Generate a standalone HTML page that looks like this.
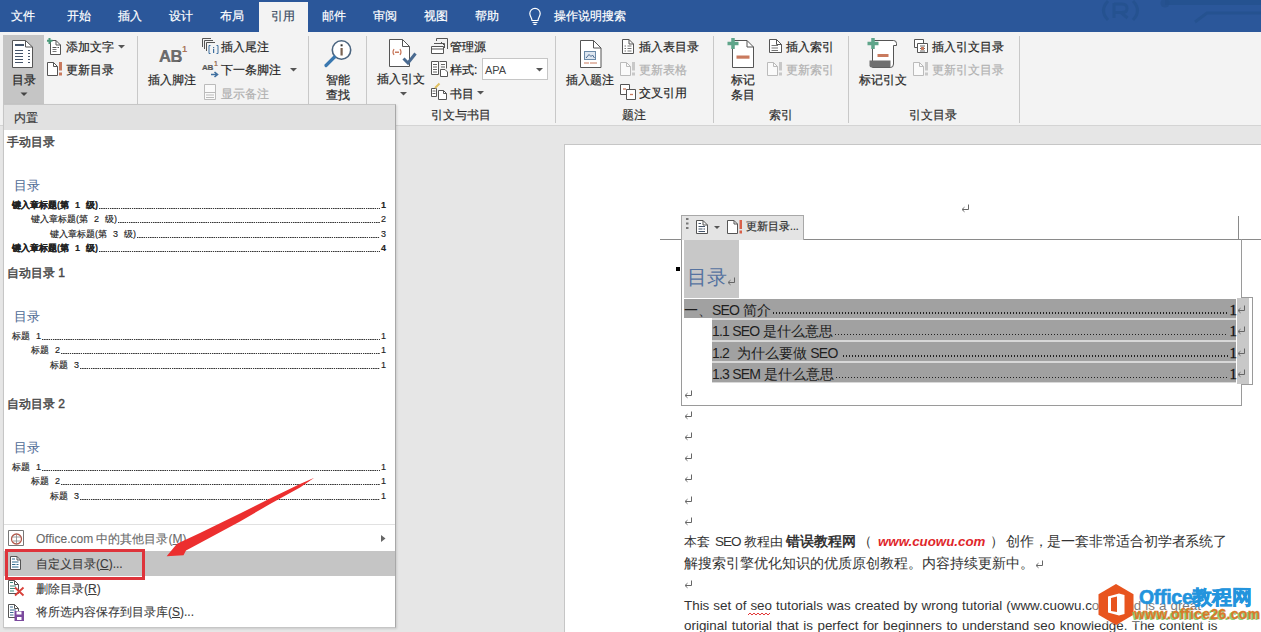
<!DOCTYPE html>
<html><head><meta charset="utf-8">
<style>
*{margin:0;padding:0;box-sizing:border-box}
html,body{width:1261px;height:632px;overflow:hidden;background:#e6e6e6;font-family:"Liberation Sans",sans-serif}
.a{position:absolute}
.t{position:absolute;white-space:nowrap;line-height:1;font-size:12px;color:#262626;-webkit-text-stroke:0.2px #262626}
.tab{-webkit-text-stroke:0.2px #fff}
.tab{color:#fff;top:10px}
.dis{color:#b1b1b1;-webkit-text-stroke:0.2px #b1b1b1}
.sep{position:absolute;width:1px;background:#c8c8c8;top:36px;height:87px}
.lbl{top:109px;color:#333}
svg{position:absolute;overflow:visible}
</style></head><body>
<!-- tab bar -->
<div class="a" style="left:0;top:0;width:1261px;height:32px;background:#2b579a"></div>
<div class="a" style="left:259px;top:2px;width:49px;height:30px;background:#f3f3f3"></div>
<div class="t tab" style="left:11px">文件</div>
<div class="t tab" style="left:67px">开始</div>
<div class="t tab" style="left:118px">插入</div>
<div class="t tab" style="left:169px">设计</div>
<div class="t tab" style="left:220px">布局</div>
<div class="t tab" style="left:271px;color:#3b4b63;-webkit-text-stroke:0.2px #3b4b63">引用</div>
<div class="t tab" style="left:322px">邮件</div>
<div class="t tab" style="left:373px">审阅</div>
<div class="t tab" style="left:424px">视图</div>
<div class="t tab" style="left:475px">帮助</div>
<div class="t tab" style="left:554px">操作说明搜索</div>

<!-- ribbon -->
<div class="a" style="left:0;top:32px;width:1261px;height:94px;background:#f3f3f3;border-bottom:1px solid #d4d4d4"></div>

<div class="a" style="left:3px;top:35px;width:41px;height:70px;background:#c5c5c5"></div>
<div class="t" style="left:12px;top:74px">目录</div>
<div class="t" style="left:66px;top:41px">添加文字</div>
<div class="t" style="left:66px;top:64px">更新目录</div>
<div class="sep" style="left:137px"></div>
<div class="t" style="left:148px;top:74px">插入脚注</div>
<div class="t" style="left:221px;top:41px">插入尾注</div>
<div class="t" style="left:221px;top:64px">下一条脚注</div>
<div class="t dis" style="left:221px;top:88px">显示备注</div>
<div class="sep" style="left:308px"></div>
<div class="t" style="left:326px;top:74px">智能</div>
<div class="t" style="left:326px;top:89px">查找</div>
<div class="sep" style="left:366px"></div>
<div class="t" style="left:377px;top:73px">插入引文</div>
<div class="t" style="left:450px;top:41px">管理源</div>
<div class="t" style="left:450px;top:64px">样式:</div>
<div class="a" style="left:482px;top:58px;width:66px;height:22px;background:#fff;border:1px solid #c6c6c6"></div>
<div class="t" style="left:485px;top:65px;font-size:11px;color:#444;-webkit-text-stroke:0">APA</div>
<div class="t" style="left:450px;top:88px">书目</div>
<div class="t lbl" style="left:431px">引文与书目</div>
<div class="sep" style="left:555px"></div>
<div class="t" style="left:566px;top:74px">插入题注</div>
<div class="t" style="left:639px;top:41px">插入表目录</div>
<div class="t dis" style="left:639px;top:64px">更新表格</div>
<div class="t" style="left:639px;top:87px">交叉引用</div>
<div class="t lbl" style="left:622px">题注</div>
<div class="sep" style="left:713px"></div>
<div class="t" style="left:731px;top:74px">标记</div>
<div class="t" style="left:731px;top:89px">条目</div>
<div class="t" style="left:786px;top:41px">插入索引</div>
<div class="t dis" style="left:786px;top:64px">更新索引</div>
<div class="t lbl" style="left:769px">索引</div>
<div class="sep" style="left:848px"></div>
<div class="t" style="left:859px;top:74px">标记引文</div>
<div class="t" style="left:932px;top:41px">插入引文目录</div>
<div class="t dis" style="left:932px;top:64px">更新引文目录</div>
<div class="t lbl" style="left:909px">引文目录</div>
<div class="sep" style="left:1019px"></div>

<!-- doc area -->
<div class="a" style="left:564px;top:144px;width:700px;height:500px;background:#fff;border-left:1px solid #c6c6c6;border-top:1px solid #c6c6c6"></div>


<style>
.pg{position:absolute;white-space:nowrap;line-height:1;color:#333}
.tr{position:absolute;height:19.3px;background:#a1a1a1}
.tt{position:absolute;white-space:nowrap;line-height:1;font-size:13.5px;color:#1e1e1e;display:flex;align-items:flex-end}
.tt .ld{flex:1;height:1.5px;margin:0 2px 3.5px 2px;background:linear-gradient(90deg,#222 50%,transparent 50%);background-size:3px 1.5px}
.tt .pn{font-family:"Liberation Serif",serif;font-size:15px;color:#111;-webkit-text-stroke:0.3px #111;position:relative;top:0.5px}
.lat{font-size:14px;letter-spacing:-0.8px}
</style>
<!-- crop marks -->
<div class="a" style="left:660px;top:239px;width:601px;height:1px;background:#8a8a8a"></div>
<div class="a" style="left:1238px;top:216px;width:1px;height:23px;background:#8a8a8a"></div>
<!-- content control -->
<div class="a" style="left:681px;top:239px;width:1px;height:166px;background:#9a9a9a"></div>
<div class="a" style="left:681px;top:405px;width:561px;height:1px;background:#9a9a9a"></div>
<div class="a" style="left:1241px;top:239px;width:1px;height:59px;background:#9a9a9a"></div>
<div class="a" style="left:1241px;top:384px;width:1px;height:22px;background:#9a9a9a"></div>
<div class="a" style="left:1241px;top:297px;width:12px;height:88px;background:#fff;border:1px solid #9a9a9a;border-left:none"></div>
<div class="a" style="left:1237px;top:298px;width:12px;height:86px;background:#c8c8c8"></div>
<div class="a" style="left:681px;top:215px;width:123px;height:25px;background:#e4e4e4;border:1px solid #a8a8a8;border-bottom:none"></div>
<div class="t" style="left:746px;top:221px;font-size:10.5px;color:#333">更新目录...</div>
<!-- heading -->
<div class="a" style="left:684px;top:240px;width:55px;height:58px;background:#c8c8c8"></div>
<div class="a" style="left:676px;top:267px;width:4px;height:4px;background:#000"></div>
<div class="pg" style="left:687px;top:267px;font-size:20px;color:#5673a0">目录</div>
<!-- rows -->
<div class="a" style="left:712px;top:318px;width:524px;height:65px;background:#d8d8d8"></div>
<div class="tr" style="left:684px;top:299px;width:552px"></div>
<div class="tr" style="left:712px;top:320.3px;width:524px"></div>
<div class="tr" style="left:712px;top:341.6px;width:524px"></div>
<div class="tr" style="left:712px;top:362.9px;width:524px"></div>
<div class="tt" style="left:684px;top:302px;width:553px"><span>一、<span class="lat">SEO</span> 简介</span><span class="ld"></span><span class="pn">1</span></div>
<div class="tt" style="left:712px;top:323.5px;width:525px"><span><span class="lat">1.1 SEO</span> 是什么意思</span><span class="ld"></span><span class="pn">1</span></div>
<div class="tt" style="left:712px;top:345px;width:525px"><span style="white-space:pre"><span class="lat">1.2</span>  为什么要做 <span class="lat">SEO</span> </span><span class="ld"></span><span class="pn">1</span></div>
<div class="tt" style="left:712px;top:366.5px;width:525px"><span><span class="lat">1.3 SEM</span> 是什么意思</span><span class="ld"></span><span class="pn">1</span></div>
<!-- body paragraph -->
<div class="pg" style="left:684px;top:535px;font-size:13.4px">本套</div>
<div class="pg" style="left:715px;top:535px;font-size:13.5px;letter-spacing:-1px">SEO</div>
<div class="pg" style="left:744px;top:535px;font-size:13.4px">教程由</div>
<div class="pg" style="left:786px;top:535px;font-size:13.7px;font-weight:bold">错误教程网</div>
<div class="pg" style="left:858px;top:535px;font-size:13.8px">（</div>
<div class="pg" style="left:878px;top:535px;font-size:13.3px;color:#e0262a;font-weight:bold;font-style:italic">www.cuowu.com</div>
<div class="pg" style="left:990px;top:535px;font-size:13.8px">）</div>
<div class="pg" style="left:1006px;top:535px;font-size:13.8px;letter-spacing:-0.2px">创作，是一套非常适合初学者系统了</div>
<div class="pg" style="left:684px;top:556px;font-size:14px">解搜索引擎优化知识的优质原创教程。内容持续更新中。</div>
<div class="pg" style="left:684px;top:599px;font-size:13.4px;word-spacing:0.3px">This set of seo tutorials was created by wrong tutorial (www.cuowu.com) and is a great</div>
<div class="pg" style="left:684px;top:619px;font-size:13.4px;word-spacing:0.8px">original tutorial that is perfect for beginners to understand seo knowledge. The content is</div>
<!-- dropdown panel -->
<div class="a" style="left:3px;top:104px;width:393px;height:524px;background:#fff;border:1px solid #c6c6c6;border-right-color:#a8a8a8;box-shadow:1px 1px 2px rgba(0,0,0,0.12)"></div>
<div class="a" style="left:4px;top:105px;width:391px;height:25px;background:#e1e1e1"></div>
<div class="t" style="left:14px;top:112px;color:#444">内置</div>
<div class="t" style="left:7px;top:136px;color:#484848;-webkit-text-stroke:0.45px #484848">手动目录</div>
<div class="t" style="left:7px;top:267px;color:#484848;-webkit-text-stroke:0.45px #484848">自动目录 1</div>
<div class="t" style="left:7px;top:398px;color:#484848;-webkit-text-stroke:0.45px #484848">自动目录 2</div>


<style>
.pv{position:absolute;font-size:13px;line-height:1;color:#4d6a94;white-space:nowrap}
.row{position:absolute;display:flex;align-items:flex-end;font-size:9px;line-height:9px;color:#222;white-space:nowrap;-webkit-text-stroke:0.15px #222}
.row .ld{flex:1;height:1px;margin:0 1px 1px 1px;background:linear-gradient(90deg,#333 50%,transparent 50%);background-size:2.2px 1px}
.row span:first-child{word-spacing:3.5px}
.b{font-weight:bold}
.mi{position:absolute;font-size:12px;line-height:1;color:#3a3a3a;white-space:nowrap;-webkit-text-stroke:0.1px #3a3a3a}
</style>
<div class="pv" style="left:14px;top:179px">目录</div>
<div class="row b" style="left:12px;top:201px;width:374px"><span>键入章标题(第 1 级)</span><span class="ld"></span><span>1</span></div>
<div class="row" style="left:31px;top:215px;width:355px"><span>键入章标题(第 2 级)</span><span class="ld"></span><span>2</span></div>
<div class="row" style="left:50px;top:230px;width:336px"><span>键入章标题(第 3 级)</span><span class="ld"></span><span>3</span></div>
<div class="row b" style="left:12px;top:244px;width:374px"><span>键入章标题(第 1 级)</span><span class="ld"></span><span>4</span></div>

<div class="pv" style="left:14px;top:310px">目录</div>
<div class="row" style="left:12px;top:332px;width:374px"><span>标题 1</span><span class="ld"></span><span>1</span></div>
<div class="row" style="left:31px;top:346px;width:355px"><span>标题 2</span><span class="ld"></span><span>1</span></div>
<div class="row" style="left:50px;top:361px;width:336px"><span>标题 3</span><span class="ld"></span><span>1</span></div>

<div class="pv" style="left:14px;top:441px">目录</div>
<div class="row" style="left:12px;top:463px;width:374px"><span>标题 1</span><span class="ld"></span><span>1</span></div>
<div class="row" style="left:31px;top:477px;width:355px"><span>标题 2</span><span class="ld"></span><span>1</span></div>
<div class="row" style="left:50px;top:492px;width:336px"><span>标题 3</span><span class="ld"></span><span>1</span></div>

<div class="a" style="left:4px;top:524px;width:391px;height:1px;background:#e1e1e1"></div>
<div class="mi" style="left:36px;top:533px;color:#6a6a6a;-webkit-text-stroke:0.1px #6a6a6a">Office.com 中的其他目录(<u>M</u>)</div>
<div class="a" style="left:4px;top:551px;width:391px;height:25px;background:#c5c5c5"></div>
<div class="mi" style="left:36px;top:558px">自定义目录(<u>C</u>)...</div>
<div class="mi" style="left:36px;top:583px">删除目录(<u>R</u>)</div>
<div class="mi" style="left:36px;top:606px">将所选内容保存到目录库(<u>S</u>)...</div>
<div class="a" style="left:5px;top:549px;width:140px;height:31px;border:3px solid #de343b"></div>
<svg style="left:0;top:0" width="1261" height="632"><polygon points="166.6,556.2 177,543.8 200,533 240,513.5 270,498.5 300,484 314.3,477.7 300,487.5 270,504 240,521.5 200,543 186,550.5 183.5,555.3" fill="#ec2f2f"/></svg>
<!--ICONS-->
<svg style="left:12px;top:40px" width="21" height="28" viewBox="0 0 21 28"><path d="M0.5,0.5H13.5L20.5,7V27.5H0.5Z" fill="#fff" stroke="#555"/><path d="M13.5,0.5V7H20.5" fill="none" stroke="#555"/><rect x="3" y="4" width="9" height="2" fill="#44546a"/><rect x="3" y="10" width="8" height="1" fill="#44546a"/><rect x="16" y="10" width="2" height="1" fill="#44546a"/><rect x="3" y="13" width="8" height="1" fill="#44546a"/><rect x="16" y="13" width="2" height="1" fill="#44546a"/><rect x="3" y="16" width="8" height="1" fill="#44546a"/><rect x="16" y="16" width="2" height="1" fill="#44546a"/><rect x="3" y="19" width="8" height="1" fill="#44546a"/><rect x="16" y="19" width="2" height="1" fill="#44546a"/><rect x="3" y="22" width="8" height="1" fill="#44546a"/><rect x="16" y="22" width="2" height="1" fill="#44546a"/></svg>
<svg style="left:20px;top:92px" width="8" height="5" viewBox="0 0 8 5"><path d="M0.5,0.5H7.5L4,4Z" fill="#444"/></svg>
<svg style="left:47px;top:38px" width="14" height="17" viewBox="0 0 14 17"><path d="M3.5,2.5H9L13.5,7V16.5H3.5Z" fill="#fff" stroke="#555"/><path d="M9,2.5V7H13.5" fill="none" stroke="#555"/><path d="M2.5,0V6M0,2.8H5.5" stroke="#4a9a7a" stroke-width="2"/><rect x="5.5" y="9" width="4" height="1" fill="#555"/><rect x="10.5" y="9" width="1.5" height="1" fill="#555"/><rect x="5.5" y="11" width="4" height="1" fill="#777"/><rect x="5.5" y="13" width="4" height="1" fill="#777"/></svg>
<svg style="left:118px;top:45px" width="7" height="4" viewBox="0 0 7 4"><path d="M0,0H7L3.5,3.5Z" fill="#555"/></svg>
<svg style="left:47px;top:62px" width="16" height="14" viewBox="0 0 16 14"><path d="M0.5,0.5H6.5L10.5,4.5V13.5H0.5Z" fill="#fff" stroke="#555"/><path d="M6.5,0.5V4.5H10.5" fill="none" stroke="#555"/><rect x="12" y="0" width="3" height="8.5" fill="#c97a5e"/><rect x="12" y="10.5" width="3" height="3" fill="#c97a5e"/></svg>
<div class="t" style="left:159px;top:48px;font-size:16.5px;font-weight:bold;color:#6e6e6e;letter-spacing:-0.5px">AB</div><div class="t" style="left:182px;top:44px;font-size:9.5px;color:#d9804f">1</div><svg style="left:202px;top:38px" width="17" height="16" viewBox="0 0 17 16"><path d="M0.5,9V0.5H9M2.5,11V2.5H11M4.5,13V4.5H13" fill="none" stroke="#555"/><path d="M8.5,7.5H7V15.5H8.5M14.5,7.5H16V15.5H14.5" fill="none" stroke="#3f70a0"/><rect x="11" y="9" width="1.2" height="1.2" fill="#3f70a0"/><rect x="11" y="11" width="1.2" height="4" fill="#3f70a0"/></svg>
<div class="t" style="left:202px;top:64px;font-size:8px;font-weight:bold;color:#6e6e6e;letter-spacing:-0.3px">AB</div><div class="t" style="left:214px;top:60px;font-size:7px;color:#d9804f">1</div><svg style="left:211px;top:72px" width="8" height="5" viewBox="0 0 8 5"><path d="M0,2.5H6M3.5,0L6.5,2.5L3.5,5" fill="none" stroke="#3f70a0" stroke-width="1.6"/></svg>
<svg style="left:290px;top:68px" width="7" height="4" viewBox="0 0 7 4"><path d="M0,0H7L3.5,3.5Z" fill="#555"/></svg>
<svg style="left:204px;top:84px" width="12" height="16" viewBox="0 0 12 16"><path d="M0.5,0.5H11.5V15.5H0.5Z" fill="#fafafa" stroke="#bbb"/><path d="M0.5,8.5H11.5M2,11H10M2,13.5H10" stroke="#bbb"/></svg>
<svg style="left:323px;top:39px" width="30" height="29" viewBox="0 0 30 29"><circle cx="18.5" cy="11" r="9.2" fill="#fff" stroke="#4b6580" stroke-width="1.6"/><path d="M11.5,18L3,26.5" stroke="#3a78b0" stroke-width="3.2" stroke-linecap="round"/><rect x="17.5" y="9" width="2.2" height="7.5" fill="#7a6352"/><rect x="17.6" y="5.3" width="2" height="2" fill="#333"/></svg>
<svg style="left:389px;top:39px" width="28" height="28" viewBox="0 0 28 28"><path d="M0.5,0.5H13.5L20.5,7.5V27.5H0.5Z" fill="#fff" stroke="#555"/><path d="M13.5,0.5V7.5H20.5" fill="none" stroke="#555"/><path d="M5,10Q3,13 5,16M11,10Q13,13 11,16" fill="none" stroke="#c97a5e" stroke-width="1.2"/><rect x="6" y="12.5" width="4" height="1.5" fill="#c97a5e"/><path d="M14.5,19.5L19,24L26.5,14.5" fill="none" stroke="#4a6a90" stroke-width="3"/></svg>
<svg style="left:400px;top:92px" width="7" height="4" viewBox="0 0 7 4"><path d="M0,0H7L3.5,3.5Z" fill="#555"/></svg>
<svg style="left:431px;top:38px" width="17" height="16" viewBox="0 0 17 16"><path d="M5.5,3V0.5H16.5V11M3,5.5H13.5V10" fill="none" stroke="#555"/><path d="M0.5,8.5H12.5V15.5H0.5Z" fill="#fff" stroke="#555"/><path d="M1,11H12" stroke="#555"/><path d="M10,4L13,7" stroke="#555"/></svg>
<svg style="left:431px;top:61px" width="17" height="16" viewBox="0 0 17 16"><path d="M0.5,0.5H7.5V13.5H0.5ZM8.5,0.5H15.5V7.5" fill="#fff" stroke="#555"/><path d="M2,3.5H6M2,6H6M2,8.5H6M2,11H6M10,3.5H14M10,6H14" stroke="#666"/><path d="M9.5,8.5H14L16.5,11V15.5H9.5Z" fill="#fff" stroke="#555"/></svg>
<svg style="left:536px;top:68px" width="7" height="4" viewBox="0 0 7 4"><path d="M0,0H7L3.5,3.5Z" fill="#555"/></svg>
<svg style="left:431px;top:83px" width="17" height="17" viewBox="0 0 17 17"><path d="M0.5,5.5H5.5V13.5H0.5Z" fill="#fff" stroke="#555"/><path d="M1.5,8H4.5M1.5,10.5H4.5" stroke="#666"/><path d="M4,5L8.5,0.5" stroke="#e0c060" stroke-width="2"/><path d="M7.5,7.5H12.5L15.5,10.5V16.5H7.5Z" fill="#fff" stroke="#555"/><path d="M12.5,7.5V10.5H15.5" fill="none" stroke="#555"/></svg>
<svg style="left:477px;top:91px" width="7" height="4" viewBox="0 0 7 4"><path d="M0,0H7L3.5,3.5Z" fill="#555"/></svg>
<svg style="left:580px;top:40px" width="22" height="28" viewBox="0 0 22 28"><path d="M0.5,0.5H13.5L21,8V27.5H0.5Z" fill="#fff" stroke="#555"/><path d="M13.5,0.5V8H21" fill="none" stroke="#555"/><rect x="4.5" y="11.5" width="11" height="8" fill="#dde6f0" stroke="#6b8aa8"/><path d="M6,18L9,14.5L11,16.5L12.5,15L14.5,18" fill="none" stroke="#4a6a90"/><path d="M4,23H9M10,23H17" stroke="#c97a5e" stroke-width="1"/></svg>
<svg style="left:622px;top:39px" width="12" height="15" viewBox="0 0 12 15"><path d="M0.5,0.5H7L11.5,5V14.5H0.5Z" fill="#fff" stroke="#555"/><path d="M7,0.5V5H11.5" fill="none" stroke="#555"/><path d="M2.5,7H4M5.5,7H9.5M2.5,9.5H4M5.5,9.5H9.5M2.5,12H4M5.5,12H9.5" stroke="#777"/></svg>
<svg style="left:620px;top:62px" width="16" height="14" viewBox="0 0 16 14"><path d="M0.5,0.5H6.5L10.5,4.5V13.5H0.5Z" fill="#fafafa" stroke="#bbb"/><path d="M6.5,0.5V4.5H10.5" fill="none" stroke="#bbb"/><rect x="12" y="0" width="3" height="8.5" fill="#c8c8c8"/><rect x="12" y="10.5" width="3" height="3" fill="#c8c8c8"/></svg>
<svg style="left:620px;top:84px" width="17" height="16" viewBox="0 0 17 16"><path d="M0.5,0.5H9.5V10.5H0.5Z" fill="#fff" stroke="#555"/><path d="M6.5,5.5H15.5V15.5H6.5Z" fill="#fff" stroke="#555"/><path d="M3,5H6" stroke="#c97a5e" stroke-width="1.3"/><path d="M10,10.5H13" stroke="#c97a5e" stroke-width="1.3"/></svg>
<svg style="left:727px;top:38px" width="28" height="30" viewBox="0 0 28 30"><path d="M5.5,2.5H20L26.5,9V29.5H5.5Z" fill="#fff" stroke="#555"/><path d="M20,2.5V9H26.5" fill="none" stroke="#555"/><path d="M6,0V11M0.5,5.5H11.5" stroke="#5fa58a" stroke-width="3.5"/><rect x="9.5" y="17.5" width="13" height="3.2" fill="#c97a5e"/></svg>
<svg style="left:769px;top:39px" width="13" height="14" viewBox="0 0 13 14"><path d="M0.5,0.5H7.5L12.5,5.5V13.5H0.5Z" fill="#fff" stroke="#555"/><path d="M7.5,0.5V5.5H12.5" fill="none" stroke="#555"/><path d="M2.5,6.5H9M2.5,9H9M2.5,11.5H9" stroke="#777"/></svg>
<svg style="left:767px;top:62px" width="16" height="14" viewBox="0 0 16 14"><path d="M0.5,0.5H6.5L10.5,4.5V13.5H0.5Z" fill="#fafafa" stroke="#bbb"/><path d="M6.5,0.5V4.5H10.5" fill="none" stroke="#bbb"/><rect x="12" y="0" width="3" height="8.5" fill="#c8c8c8"/><rect x="12" y="10.5" width="3" height="3" fill="#c8c8c8"/></svg>
<svg style="left:867px;top:38px" width="31" height="30" viewBox="0 0 31 30"><path d="M5.5,2.5H26.5Q29.5,2.5 29.5,5.5V7.5H26.5V26Q26.5,29.5 23.5,29.5H5.5Z" fill="#fff" stroke="#555"/><path d="M2.5,22.5H23.5V29.5H4.5Q2.5,29.5 2.5,27.5Z" fill="#6f6f6f"/><path d="M6,0V11M0.5,5.5H11.5" stroke="#5fa58a" stroke-width="3.5"/><rect x="10.5" y="16" width="11" height="3" fill="#c97a5e"/></svg>
<svg style="left:914px;top:39px" width="15" height="14" viewBox="0 0 15 14"><path d="M0.5,0.5H9.5V8.5H0.5Z" fill="#fff" stroke="#555"/><path d="M3.5,4.5H13.5V13.5H3.5Z" fill="#fff" stroke="#555"/><path d="M6,7H11M6,9.5H11M6,12H11" stroke="#666"/><rect x="7" y="8" width="3" height="3" fill="#c97a5e"/></svg>
<svg style="left:913px;top:62px" width="16" height="14" viewBox="0 0 16 14"><path d="M0.5,0.5H6.5L10.5,4.5V13.5H0.5Z" fill="#fafafa" stroke="#bbb"/><path d="M6.5,0.5V4.5H10.5" fill="none" stroke="#bbb"/><rect x="12" y="0" width="3" height="8.5" fill="#c8c8c8"/><rect x="12" y="10.5" width="3" height="3" fill="#c8c8c8"/></svg>
<svg style="left:529px;top:8px" width="12" height="17" viewBox="0 0 12 17"><path d="M3,12.5C3,10 0.8,8.5 0.8,5.6A5.2,5.2 0 0 1 11.2,5.6C11.2,8.5 9,10 9,12.5Z" fill="none" stroke="#fff" stroke-width="1.2"/><path d="M3.5,14.5H8.5M4.5,16.3H7.5" stroke="#fff" stroke-width="1.2"/></svg>
<svg style="left:961px;top:204px" width="9" height="8" viewBox="0 0 9 8"><path d="M7.5,0.5V5.5H1.5" fill="none" stroke="#666" stroke-width="1"/><path d="M3.5,3.2L1,5.5L3.5,7.8" fill="none" stroke="#666" stroke-width="1"/></svg>
<svg style="left:727px;top:277px" width="9" height="8" viewBox="0 0 9 8"><path d="M7.5,0.5V5.5H1.5" fill="none" stroke="#666" stroke-width="1"/><path d="M3.5,3.2L1,5.5L3.5,7.8" fill="none" stroke="#666" stroke-width="1"/></svg>
<svg style="left:684px;top:390px" width="9" height="8" viewBox="0 0 9 8"><path d="M7.5,0.5V5.5H1.5" fill="none" stroke="#666" stroke-width="1"/><path d="M3.5,3.2L1,5.5L3.5,7.8" fill="none" stroke="#666" stroke-width="1"/></svg>
<svg style="left:684px;top:411px" width="9" height="8" viewBox="0 0 9 8"><path d="M7.5,0.5V5.5H1.5" fill="none" stroke="#666" stroke-width="1"/><path d="M3.5,3.2L1,5.5L3.5,7.8" fill="none" stroke="#666" stroke-width="1"/></svg>
<svg style="left:684px;top:432px" width="9" height="8" viewBox="0 0 9 8"><path d="M7.5,0.5V5.5H1.5" fill="none" stroke="#666" stroke-width="1"/><path d="M3.5,3.2L1,5.5L3.5,7.8" fill="none" stroke="#666" stroke-width="1"/></svg>
<svg style="left:684px;top:453px" width="9" height="8" viewBox="0 0 9 8"><path d="M7.5,0.5V5.5H1.5" fill="none" stroke="#666" stroke-width="1"/><path d="M3.5,3.2L1,5.5L3.5,7.8" fill="none" stroke="#666" stroke-width="1"/></svg>
<svg style="left:684px;top:474px" width="9" height="8" viewBox="0 0 9 8"><path d="M7.5,0.5V5.5H1.5" fill="none" stroke="#666" stroke-width="1"/><path d="M3.5,3.2L1,5.5L3.5,7.8" fill="none" stroke="#666" stroke-width="1"/></svg>
<svg style="left:684px;top:496px" width="9" height="8" viewBox="0 0 9 8"><path d="M7.5,0.5V5.5H1.5" fill="none" stroke="#666" stroke-width="1"/><path d="M3.5,3.2L1,5.5L3.5,7.8" fill="none" stroke="#666" stroke-width="1"/></svg>
<svg style="left:684px;top:517px" width="9" height="8" viewBox="0 0 9 8"><path d="M7.5,0.5V5.5H1.5" fill="none" stroke="#666" stroke-width="1"/><path d="M3.5,3.2L1,5.5L3.5,7.8" fill="none" stroke="#666" stroke-width="1"/></svg>
<svg style="left:684px;top:580px" width="9" height="8" viewBox="0 0 9 8"><path d="M7.5,0.5V5.5H1.5" fill="none" stroke="#666" stroke-width="1"/><path d="M3.5,3.2L1,5.5L3.5,7.8" fill="none" stroke="#666" stroke-width="1"/></svg>
<svg style="left:1035px;top:560px" width="9" height="8" viewBox="0 0 9 8"><path d="M7.5,0.5V5.5H1.5" fill="none" stroke="#666" stroke-width="1"/><path d="M3.5,3.2L1,5.5L3.5,7.8" fill="none" stroke="#666" stroke-width="1"/></svg>
<svg style="left:1237px;top:305px" width="9" height="8" viewBox="0 0 9 8"><path d="M7.5,0.5V5.5H1.5" fill="none" stroke="#666" stroke-width="1"/><path d="M3.5,3.2L1,5.5L3.5,7.8" fill="none" stroke="#666" stroke-width="1"/></svg>
<svg style="left:1237px;top:326px" width="9" height="8" viewBox="0 0 9 8"><path d="M7.5,0.5V5.5H1.5" fill="none" stroke="#666" stroke-width="1"/><path d="M3.5,3.2L1,5.5L3.5,7.8" fill="none" stroke="#666" stroke-width="1"/></svg>
<svg style="left:1237px;top:348px" width="9" height="8" viewBox="0 0 9 8"><path d="M7.5,0.5V5.5H1.5" fill="none" stroke="#666" stroke-width="1"/><path d="M3.5,3.2L1,5.5L3.5,7.8" fill="none" stroke="#666" stroke-width="1"/></svg>
<svg style="left:1237px;top:369px" width="9" height="8" viewBox="0 0 9 8"><path d="M7.5,0.5V5.5H1.5" fill="none" stroke="#666" stroke-width="1"/><path d="M3.5,3.2L1,5.5L3.5,7.8" fill="none" stroke="#666" stroke-width="1"/></svg>
<svg style="left:686px;top:218px" width="3" height="12" viewBox="0 0 3 12"><rect x="0" y="0" width="2.5" height="2" fill="#777"/><rect x="0" y="4.5" width="2.5" height="2" fill="#777"/><rect x="0" y="9" width="2.5" height="2" fill="#777"/></svg>
<svg style="left:696px;top:220px" width="12" height="14" viewBox="0 0 12 14"><path d="M0.5,0.5H7L11.5,5V13.5H0.5Z" fill="#fff" stroke="#555"/><path d="M7,0.5V5H11.5" fill="none" stroke="#555"/><path d="M2.5,3.5H5M2.5,6.5H9M2.5,9H6.5M7.5,9H9M2.5,11.5H9" stroke="#44546a"/></svg>
<svg style="left:714px;top:226px" width="6" height="4" viewBox="0 0 6 4"><path d="M0,0H6L3,3Z" fill="#555"/></svg>
<svg style="left:727px;top:220px" width="16" height="14" viewBox="0 0 16 14"><path d="M0.5,0.5H7L10.5,4V13.5H0.5Z" fill="#fff" stroke="#555"/><path d="M7,0.5V4H10.5" fill="none" stroke="#555"/><rect x="12.5" y="0" width="2.5" height="9" fill="#d9604a"/><rect x="12.5" y="10.5" width="2.5" height="3" fill="#d9604a"/></svg>
<svg style="left:8px;top:530px" width="16" height="16" viewBox="0 0 16 16"><path d="M0.5,0.5H15.5V15.5H0.5Z" fill="#fff" stroke="#777"/><circle cx="8.5" cy="9" r="5" fill="none" stroke="#b5584a" stroke-width="1.3"/><path d="M4,7H13M5,11H12M8.5,4V14" stroke="#888" stroke-width="0.8"/></svg>
<svg style="left:10px;top:556px" width="11" height="14" viewBox="0 0 11 14"><path d="M0.5,0.5H7L10.5,4V13.5H0.5Z" fill="#fff" stroke="#555"/><path d="M7,0.5V4H10.5" fill="none" stroke="#555"/><path d="M2,3H5M2,6H8.5M2,8.5H5.5M6.5,8.5H8.5M2,11H8.5" stroke="#2f6c8f"/></svg>
<svg style="left:8px;top:580px" width="17" height="16" viewBox="0 0 17 16"><path d="M0.5,0.5H6.5L10.5,4.5V13.5H0.5Z" fill="#fff" stroke="#555"/><path d="M6.5,0.5V4.5H10.5" fill="none" stroke="#555"/><path d="M2,2.5H5M2,6H8M2,8.5H7M2,11H6" stroke="#3a8a7a"/><path d="M7,7.5L15.5,15.5M15.5,7.5L7,15.5" stroke="#d8403a" stroke-width="1.8"/></svg>
<svg style="left:8px;top:604px" width="17" height="18" viewBox="0 0 17 18"><path d="M0.5,0.5H6.5L10.5,4.5V13.5H0.5Z" fill="#fff" stroke="#555"/><path d="M6.5,0.5V4.5H10.5" fill="none" stroke="#555"/><path d="M2,3H5M2,6H8M2,8.5H5.5M2,11H5.5" stroke="#3a6a8f"/><rect x="6.5" y="7" width="9.5" height="10" fill="#7b4a9e"/><rect x="8.5" y="7.5" width="5" height="3" fill="#fff"/><rect x="9" y="13" width="4.5" height="3" fill="#fff"/></svg>
<svg style="left:381px;top:535px" width="5" height="7" viewBox="0 0 5 7"><path d="M0,0L4.5,3.5L0,7Z" fill="#666"/></svg>
<svg style="left:748px;top:612px" width="23" height="4" viewBox="0 0 23 4"><path d="M0,3 L2,1 L4,3 L6,1 L8,3 L10,1 L12,3 L14,1 L16,3 L18,1 L20,3 L22,1" fill="none" stroke="#e02020" stroke-width="0.9"/></svg>
<svg style="left:1095px;top:0px" width="166" height="25" viewBox="0 0 166 25"><g fill="none" stroke="#23508c" opacity="0.65"><path d="M13,1Q4,10.5 13,20M38,1Q47,10.5 38,20" stroke-width="3"/><path d="M19,3V18M19,4H27Q32,4 32,8.5Q32,12.5 27,12.5H19M26,12.5L32.5,18" stroke-width="3"/><path d="M70,2.5H166" stroke-width="5"/><path d="M100,22L112,13H166" stroke-width="3"/></g><circle cx="70" cy="3" r="4.5" fill="#23508c" opacity="0.65"/></svg>
<div class="a" style="left:1092px;top:578px;width:169px;height:46px;background:rgba(255,255,255,0.35)"></div><svg style="left:1098px;top:584px" width="36" height="41" viewBox="0 0 36 41"><path d="M18,0L35.5,10.2V30.8L18,41L0.5,30.8V10.2Z" fill="#e8541e"/><path d="M10,12.5L21,9.5L26.5,11V30L21,31.5L10,28.5Z" fill="#fff"/><path d="M13,14L19,12.5V28L13,27Z" fill="#e8541e"/></svg>
<div class="t" style="left:1139px;top:588px;font-size:19.5px;font-weight:bold;color:#2394dd;-webkit-text-stroke:0.6px #2394dd;letter-spacing:-0.3px">Office教程网</div><div class="t" style="left:1132px;top:608px;font-size:14px;font-weight:bold;color:#66c04e;-webkit-text-stroke:0px;letter-spacing:0.3px;opacity:0.75">www.office26.com</div><div class="t" style="left:1134px;top:607px;font-size:14px;font-weight:bold;color:#d87a2a;-webkit-text-stroke:0.3px #d87a2a;letter-spacing:0.3px">www.office26.com</div><!--/ICONS-->
</body></html>
